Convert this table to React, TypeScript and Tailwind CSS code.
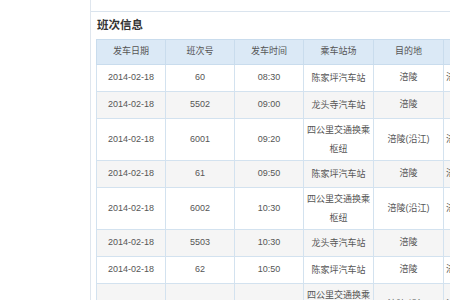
import React from "react";

type Row = { d: string; n: string; t: string; s: React.ReactNode; two?: boolean; dest: string; last: string };

const rows: Row[] = [
  { d: "2014-02-18", n: "60", t: "08:30", s: "陈家坪汽车站", dest: "涪陵", last: "涪陵" },
  { d: "2014-02-18", n: "5502", t: "09:00", s: "龙头寺汽车站", dest: "涪陵", last: "" },
  { d: "2014-02-18", n: "6001", t: "09:20", s: <>四公里交通换乘<br />枢纽</>, two: true, dest: "涪陵(沿江)", last: "涪陵" },
  { d: "2014-02-18", n: "61", t: "09:50", s: "陈家坪汽车站", dest: "涪陵", last: "涪陵" },
  { d: "2014-02-18", n: "6002", t: "10:30", s: <>四公里交通换乘<br />枢纽</>, two: true, dest: "涪陵(沿江)", last: "涪陵" },
  { d: "2014-02-18", n: "5503", t: "10:30", s: "龙头寺汽车站", dest: "涪陵", last: "" },
  { d: "2014-02-18", n: "62", t: "10:50", s: "陈家坪汽车站", dest: "涪陵", last: "涪陵" },
  { d: "2014-02-18", n: "6003", t: "11:00", s: <>四公里交通换乘<br />枢纽</>, two: true, dest: "涪陵(沿江)", last: "涪陵" },
];

const font = { fontFamily: '"Liberation Sans", "Noto Sans CJK SC", sans-serif' };

export default function App() {
  return (
    <div className="w-[450px] h-[300px] overflow-hidden bg-white flex" style={font}>
      <div className="w-[90px] shrink-0" />
      <div className="flex-1 border-l border-[#dfe6ee] pt-[11px] overflow-hidden">
        <div className="border-t border-[#dae4ee] pl-[5px]">
          <div className="h-[27px] flex items-center pl-[1px] text-[11.5px] font-bold text-[#333]">班次信息</div>
          <table className="table-fixed border-collapse w-[420px] text-[9px] text-[#555] text-center">
            <colgroup>
              <col className="w-[69px]" />
              <col className="w-[69px]" />
              <col className="w-[69px]" />
              <col className="w-[70px]" />
              <col className="w-[70px]" />
              <col className="w-[73px]" />
            </colgroup>
            <thead>
              <tr className="h-[25px] bg-[#dbe9f6]">
                {["发车日期", "班次号", "发车时间", "乘车站场", "目的地", "票价"].map((h) => (
                  <th key={h} className="border border-[#c9dced] font-normal p-0">{h}</th>
                ))}
              </tr>
            </thead>
            <tbody>
              {rows.map((r, i) => (
                <tr key={i} className={`${r.two ? "h-[42px]" : "h-[27px]"} ${i % 2 === 1 ? "bg-[#f5f5f5]" : "bg-white"}`}>
                  <td className="border border-[#d3e2ef] p-0">{r.d}</td>
                  <td className="border border-[#d3e2ef] p-0">{r.n}</td>
                  <td className="border border-[#d3e2ef] p-0">{r.t}</td>
                  <td className="border border-[#d3e2ef] p-0 leading-[19px]">{r.s}</td>
                  <td className="border border-[#d3e2ef] p-0">{r.dest}</td>
                  <td className="border border-[#d3e2ef] p-0 text-left pl-[2px]">{r.last}</td>
                </tr>
              ))}
            </tbody>
          </table>
        </div>
      </div>
    </div>
  );
}
